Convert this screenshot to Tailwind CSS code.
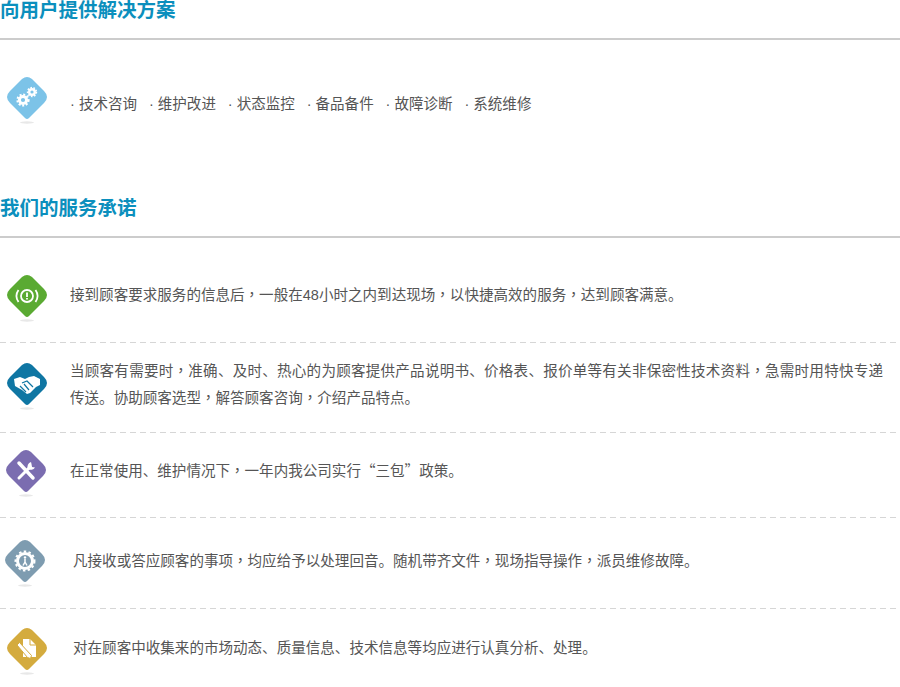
<!DOCTYPE html>
<html lang="zh-CN">
<head>
    <meta charset="UTF-8">
    <title>服务</title>
    <script src="https://cdn.jsdelivr.net/npm/@tailwindcss/browser@4"></script>
</head>
<body class="bg-white overflow-hidden font-['Liberation_Sans','Noto_Sans_CJK_SC',sans-serif] text-[14.55px] leading-[26px] text-[#555]">
<div class="w-[900px] h-[687px] overflow-hidden">

    <!-- 方案 -->
    <h2 class="h-[41px] -mt-[1px] text-[19.5px] leading-[22px] font-bold text-[#0b8fbd] border-b-2 border-[#ccc]">向用户提供解决方案</h2>
    <div class="h-[157px] pt-[35px] flex items-start">
        <svg class="w-[48px] h-[52px] ml-[3px] shrink-0" viewBox="0 0 48 52">
            <ellipse cx="24" cy="47.500" rx="7" ry="1.200" fill="#e8e8e8"/>
            <path d="M19 4Q24 0 29 4L41 16Q47 22 41 28L26 43Q24 45 22 43L7 28Q1 22 7 16Z" fill="#7cc3e8"/>
            <circle cx="20" cy="25" r="3.600" fill="none" stroke="#fff" stroke-width="3"/>
            <circle cx="20" cy="25" r="5.600" fill="none" stroke="#fff" stroke-width="2" stroke-dasharray="2 1.700"/>
            <circle cx="29" cy="17" r="2.800" fill="none" stroke="#fff" stroke-width="2.400"/>
            <circle cx="29" cy="17" r="4.400" fill="none" stroke="#fff" stroke-width="1.600" stroke-dasharray="1.600 1.500"/>
        </svg>
        <div class="ml-[19px] mt-[16px] flex gap-[11.800px]">
            <span>· 技术咨询</span><span>· 维护改进</span><span>· 状态监控</span><span>· 备品备件</span><span>· 故障诊断</span><span>· 系统维修</span>
        </div>
    </div>

    <!-- 承诺 -->
    <h2 class="h-[41px] text-[19.5px] leading-[22px] font-bold text-[#0b8fbd] border-b-2 border-[#ccc]">我们的服务承诺</h2>

    <div class="h-[104px] flex items-start pt-[35px]">
        <svg class="w-[48px] h-[52px] ml-[3px] shrink-0" viewBox="0 0 48 52">
            <ellipse cx="24" cy="47.500" rx="7" ry="1.200" fill="#e8e8e8"/>
            <path d="M19 4Q24 0 29 4L41 16Q47 22 41 28L26 43Q24 45 22 43L7 28Q1 22 7 16Z" fill="#5aaa32"/>
            <circle cx="24" cy="23" r="6" fill="none" stroke="#fff" stroke-width="1.800"/>
            <path d="M15.500 17a10.500 10.500 0 0 0 0 12M32.500 17a10.500 10.500 0 0 1 0 12" fill="none" stroke="#fff" stroke-width="1.800"/>
            <path d="M24 19.500v4.500M24 25v1.500" stroke="#fff" stroke-width="1.800"/>
        </svg>
        <p class="ml-[19px] mt-[8px]">接到顾客要求服务的信息后<span lang="zh-TW" class="font-['Noto_Sans_CJK_TC']">，</span>一般在48小时之内到达现场<span lang="zh-TW" class="font-['Noto_Sans_CJK_TC']">，</span>以快捷高效的服务<span lang="zh-TW" class="font-['Noto_Sans_CJK_TC']">，</span>达到顾客满意。</p>
    </div>
    <div class="h-px bg-[repeating-linear-gradient(90deg,#d6d6d6_0_6px,transparent_6px_10px)]"></div>

    <div class="h-[89px] flex items-start pt-[18px]">
        <svg class="w-[48px] h-[52px] ml-[3px] shrink-0" viewBox="0 0 48 52">
            <ellipse cx="24" cy="47.500" rx="7" ry="1.200" fill="#e8e8e8"/>
            <path d="M19 4Q24 0 29 4L41 16Q47 22 41 28L26 43Q24 45 22 43L7 28Q1 22 7 16Z" fill="#0f76a3"/>
            <path d="M11 18l6-2 5 2 4-2 5-1 6 3 0 6-4 2-6 6-3 1-5-4-7-4z" fill="#fff"/>
            <path d="M19 22l5-2 6 6M17 25l6 6M21 23l5 6" fill="none" stroke="#0f76a3" stroke-width="1.200"/>
        </svg>
        <p class="ml-[19px] -mt-[4px] w-[813px]"><span class="block [text-align-last:justify]">当顾客有需要时<span lang="zh-TW" class="font-['Noto_Sans_CJK_TC']">，</span>准确、及时、热心的为顾客提供产品说明书、价格表、报价单等有关非保密性技术资料<span lang="zh-TW" class="font-['Noto_Sans_CJK_TC']">，</span>急需时用特快专递</span>传送。协助顾客选型<span lang="zh-TW" class="font-['Noto_Sans_CJK_TC']">，</span>解答顾客咨询<span lang="zh-TW" class="font-['Noto_Sans_CJK_TC']">，</span>介绍产品特点。</p>
    </div>
    <div class="h-px bg-[repeating-linear-gradient(90deg,#d6d6d6_0_6px,transparent_6px_10px)]"></div>

    <div class="h-[84px] flex items-start pt-[15px]">
        <svg class="w-[48px] h-[52px] ml-[2px] shrink-0" viewBox="0 0 48 52">
            <ellipse cx="24" cy="47.500" rx="7" ry="1.200" fill="#e8e8e8"/>
            <path d="M19 4Q24 0 29 4L41 16Q47 22 41 28L26 43Q24 45 22 43L7 28Q1 22 7 16Z" fill="#7b6db0"/>
            <path d="M17 15l14 15" stroke="#fff" stroke-width="3.500" stroke-linecap="round"/>
            <path d="M17 30l11-11" stroke="#fff" stroke-width="3" stroke-linecap="round"/>
            <path d="M29 14a5 5 0 0 0-3 7 5 5 0 0 0 7-1.500l-3-.5-.5-3z" fill="#fff"/>
        </svg>
        <p class="ml-[20px] mt-[9px] font-['Noto_Sans_CJK_SC',sans-serif]">在正常使用、维护情况下<span lang="zh-TW" class="font-['Noto_Sans_CJK_TC']">，</span>一年内我公司实行“三包”政策。</p>
    </div>
    <div class="h-px bg-[repeating-linear-gradient(90deg,#d6d6d6_0_6px,transparent_6px_10px)]"></div>

    <div class="h-[90px] flex items-start pt-[20px]">
        <svg class="w-[48px] h-[52px] ml-[1px] shrink-0" viewBox="0 0 48 52">
            <ellipse cx="24" cy="47.500" rx="7" ry="1.200" fill="#e8e8e8"/>
            <path d="M19 4Q24 0 29 4L41 16Q47 22 41 28L26 43Q24 45 22 43L7 28Q1 22 7 16Z" fill="#7e9cb0"/>
            <circle cx="24" cy="23" r="7.500" fill="none" stroke="#fff" stroke-width="3"/>
            <circle cx="24" cy="23" r="9.500" fill="none" stroke="#fff" stroke-width="2" stroke-dasharray="2.500 2.300"/>
            <circle cx="24" cy="19.500" r="1.200" fill="#fff"/>
            <path d="M24 21v3l-2 3.500M24 24l2 3.500" fill="none" stroke="#fff" stroke-width="1.500"/>
        </svg>
        <p class="ml-[24px] mt-[9px]">凡接收或答应顾客的事项<span lang="zh-TW" class="font-['Noto_Sans_CJK_TC']">，</span>均应给予以处理回音。随机带齐文件<span lang="zh-TW" class="font-['Noto_Sans_CJK_TC']">，</span>现场指导操作<span lang="zh-TW" class="font-['Noto_Sans_CJK_TC']">，</span>派员维修故障。</p>
    </div>
    <div class="h-px bg-[repeating-linear-gradient(90deg,#d6d6d6_0_6px,transparent_6px_10px)]"></div>

    <div class="flex items-start pt-[17px]">
        <svg class="w-[48px] h-[52px] ml-[3px] shrink-0" viewBox="0 0 48 52">
            <ellipse cx="24" cy="47.500" rx="7" ry="1.200" fill="#e8e8e8"/>
            <path d="M19 4Q24 0 29 4L41 16Q47 22 41 28L26 43Q24 45 22 43L7 28Q1 22 7 16Z" fill="#d4ab3e"/>
            <path d="M20 13h7l6 6v12H20z" fill="#fff"/>
            <path d="M27 13v6h6" fill="none" stroke="#d4ab3e" stroke-width="1"/>
            <path d="M14 19l2.500-2.500 12 13-1 3-3-1z" fill="#fff" stroke="#d4ab3e" stroke-width="1"/>
        </svg>
        <p class="ml-[22px] mt-[9px]">对在顾客中收集来的市场动态、质量信息、技术信息等均应进行认真分析、处理。</p>
    </div>
</div>
</body>
</html>
